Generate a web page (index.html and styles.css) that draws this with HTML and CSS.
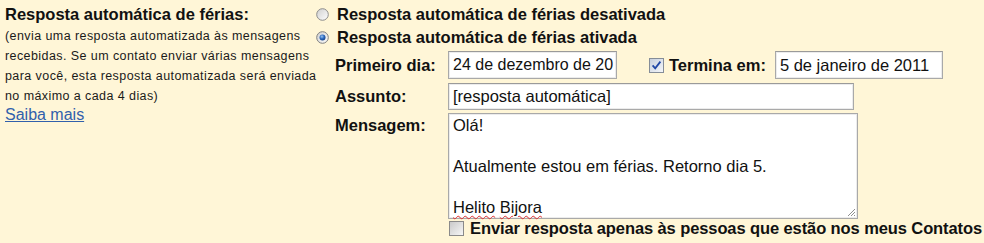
FILE: index.html
```html
<!DOCTYPE html>
<html lang="pt-BR">
<head>
<meta charset="utf-8">
<title>Resposta automática de férias</title>
<link rel="stylesheet" href="styles.css">
</head>
<body>
<div class="page">
  <div class="left">
    <div class="heading">Resposta automática de férias:</div>
    <div class="note">
      <span class="note-line">(envia uma resposta automatizada às mensagens</span>
      <span class="note-line">recebidas. Se um contato enviar várias mensagens</span>
      <span class="note-line">para você, esta resposta automatizada será enviada</span>
      <span class="note-line">no máximo a cada 4 dias)</span>
    </div>
    <a class="link" href="#">Saiba mais</a>
  </div>
  <div class="right">
    <div class="radios">
      <div class="radio-row">
        <svg class="radio" width="13" height="13" viewBox="0 0 13 13">
          <defs>
            <linearGradient id="rg1" x1="0" y1="0" x2="1" y2="1">
              <stop offset="0" stop-color="#cfcfcf"/>
              <stop offset="1" stop-color="#ffffff"/>
            </linearGradient>
          </defs>
          <circle cx="6.5" cy="6.5" r="5.8" fill="url(#rg1)" stroke="#8c8c8c" stroke-width="1"/>
        </svg>
        <span class="bold">Resposta automática de férias desativada</span>
      </div>
      <div class="radio-row">
        <svg class="radio" width="13" height="13" viewBox="0 0 13 13">
          <defs>
            <linearGradient id="rg2" x1="0" y1="0" x2="1" y2="1">
              <stop offset="0" stop-color="#cfcfcf"/>
              <stop offset="1" stop-color="#ffffff"/>
            </linearGradient>
            <radialGradient id="dot" cx="0.4" cy="0.35" r="0.7">
              <stop offset="0" stop-color="#9cc6f2"/>
              <stop offset="0.5" stop-color="#2f6cc0"/>
              <stop offset="1" stop-color="#123f85"/>
            </radialGradient>
          </defs>
          <circle cx="6.5" cy="6.5" r="5.8" fill="url(#rg2)" stroke="#7e7e7e" stroke-width="1"/>
          <circle cx="6.5" cy="6.5" r="3" fill="url(#dot)"/>
        </svg>
        <span class="bold">Resposta automática de férias ativada</span>
      </div>
    </div>
    <div class="form">
      <div class="label">Primeiro dia:</div>
      <div class="field dates">
        <div class="input w-date">24 de dezembro de 20</div>
        <svg class="check check-end" width="15" height="15" viewBox="0 0 15 15">
          <defs>
            <linearGradient id="cg1" x1="0" y1="0" x2="1" y2="1">
              <stop offset="0" stop-color="#c4cddc"/>
              <stop offset="1" stop-color="#f6f8fb"/>
            </linearGradient>
          </defs>
          <rect x="0.5" y="0.5" width="14" height="14" fill="url(#cg1)" stroke="#858d98"/>
          <path d="M3.6 7.4 L6.2 10.4 L11.4 3.6" fill="none" stroke="#2148a6" stroke-width="1.8"/>
        </svg>
        <span class="bold">Termina em:</span>
        <div class="input w-date2">5 de janeiro de 2011</div>
      </div>
      <div class="label">Assunto:</div>
      <div class="field">
        <div class="input w-subject">[resposta automática]</div>
      </div>
      <div class="label label-msg">Mensagem:</div>
      <div class="field">
        <div class="textarea">
          <div class="line">Olá!</div>
          <div class="line">&nbsp;</div>
          <div class="line">Atualmente estou em férias. Retorno dia 5.</div>
          <div class="line">&nbsp;</div>
          <div class="line"><span class="spell">Helito</span> <span class="spell">Bijora</span></div>
          <svg class="grip" width="10" height="10" viewBox="0 0 10 10">
            <path d="M9 2 L2 9 M9 5 L5 9 M9 8 L8 9" stroke="#8f8f8f" stroke-width="1"/>
          </svg>
        </div>
      </div>
      <div class="label"></div>
      <div class="field contacts">
        <svg class="check" width="15" height="15" viewBox="0 0 15 15">
          <defs>
            <linearGradient id="cg2" x1="0" y1="0" x2="1" y2="1">
              <stop offset="0" stop-color="#c8c8c8"/>
              <stop offset="1" stop-color="#f8f8f8"/>
            </linearGradient>
          </defs>
          <rect x="0.5" y="0.5" width="14" height="14" fill="url(#cg2)" stroke="#8a8a8a"/>
        </svg>
        <span class="bold contacts-text">Enviar resposta apenas às pessoas que estão nos meus Contatos</span>
      </div>
    </div>
  </div>
</div>
</body>
</html>
```

FILE: styles.css
```css
html, body {
  margin: 0;
  padding: 0;
  background: #fff6d7;
}

body {
  font-family: "Liberation Sans", Arial, sans-serif;
  color: #111;
  width: 984px;
}

.page {
  display: flex;
  align-items: flex-start;
}

.left {
  width: 306px;
  padding: 4px 0 0 5px;
  flex: none;
}

.heading {
  font-weight: bold;
  font-size: 16.5px;
  line-height: 20px;
}

.note {
  display: flex;
  flex-direction: column;
  font-size: 12.5px;
  letter-spacing: 0.42px;
  line-height: 20px;
  margin-top: 2px;
  color: #1a1a1a;
}

.note-line {
  white-space: nowrap;
}

.link {
  display: inline-block;
  font-size: 16px;
  line-height: 18px;
  color: #3160ac;
  text-decoration: underline;
}

.right {
  flex: 1;
  padding-top: 3px;
  padding-left: 5px;
}

.bold {
  font-weight: bold;
  font-size: 16.5px;
  white-space: nowrap;
}

.radios {
  display: flex;
  flex-direction: column;
}

.radio-row {
  display: flex;
  align-items: center;
  height: 23px;
  gap: 8px;
}

.radio {
  flex: none;
  margin-top: -1px;
}

.form {
  display: grid;
  grid-template-columns: 113px auto;
  row-gap: 3px;
  margin-top: 2px;
  padding-left: 19px;
}

.label {
  font-weight: bold;
  font-size: 16.5px;
  line-height: 28px;
  white-space: nowrap;
}

.label-msg {
  line-height: 24px;
}

.field {
  display: flex;
  align-items: center;
}

.input {
  box-sizing: border-box;
  height: 28px;
  border: 1px solid #a9a9a9;
  border-top-color: #9a9a9a;
  box-shadow: inset 0 0 0 1px #ececec;
  background: #fff;
  font-size: 16.5px;
  line-height: 26px;
  padding-left: 4px;
  overflow: hidden;
  white-space: nowrap;
}

.w-date { width: 169px; font-size: 16px; padding-left: 4px; }
.w-date2 { width: 168px; }
.w-subject { width: 406px; height: 27px; line-height: 25px; }

.check-end {
  margin-left: 32px;
  margin-right: 5px;
}

.dates .w-date2 {
  margin-left: 9px;
}

.textarea {
  position: relative;
  box-sizing: border-box;
  width: 410px;
  height: 106px;
  border: 1px solid #a9a9a9;
  box-shadow: inset 0 0 0 1px #ececec;
  background: #fff;
  font-size: 16.5px;
  line-height: 20.5px;
  padding: 1px 4px;
}

.line {
  white-space: nowrap;
}

.spell {
  text-decoration: underline wavy #e03030;
  text-decoration-thickness: 1px;
  text-underline-offset: 2px;
}

.grip {
  position: absolute;
  right: 1px;
  bottom: 1px;
}

.contacts {
  margin-top: -3px;
  gap: 6px;
  padding-left: 1px;
  line-height: 18px;
}

.contacts-text {
  letter-spacing: -0.1px;
}
```
